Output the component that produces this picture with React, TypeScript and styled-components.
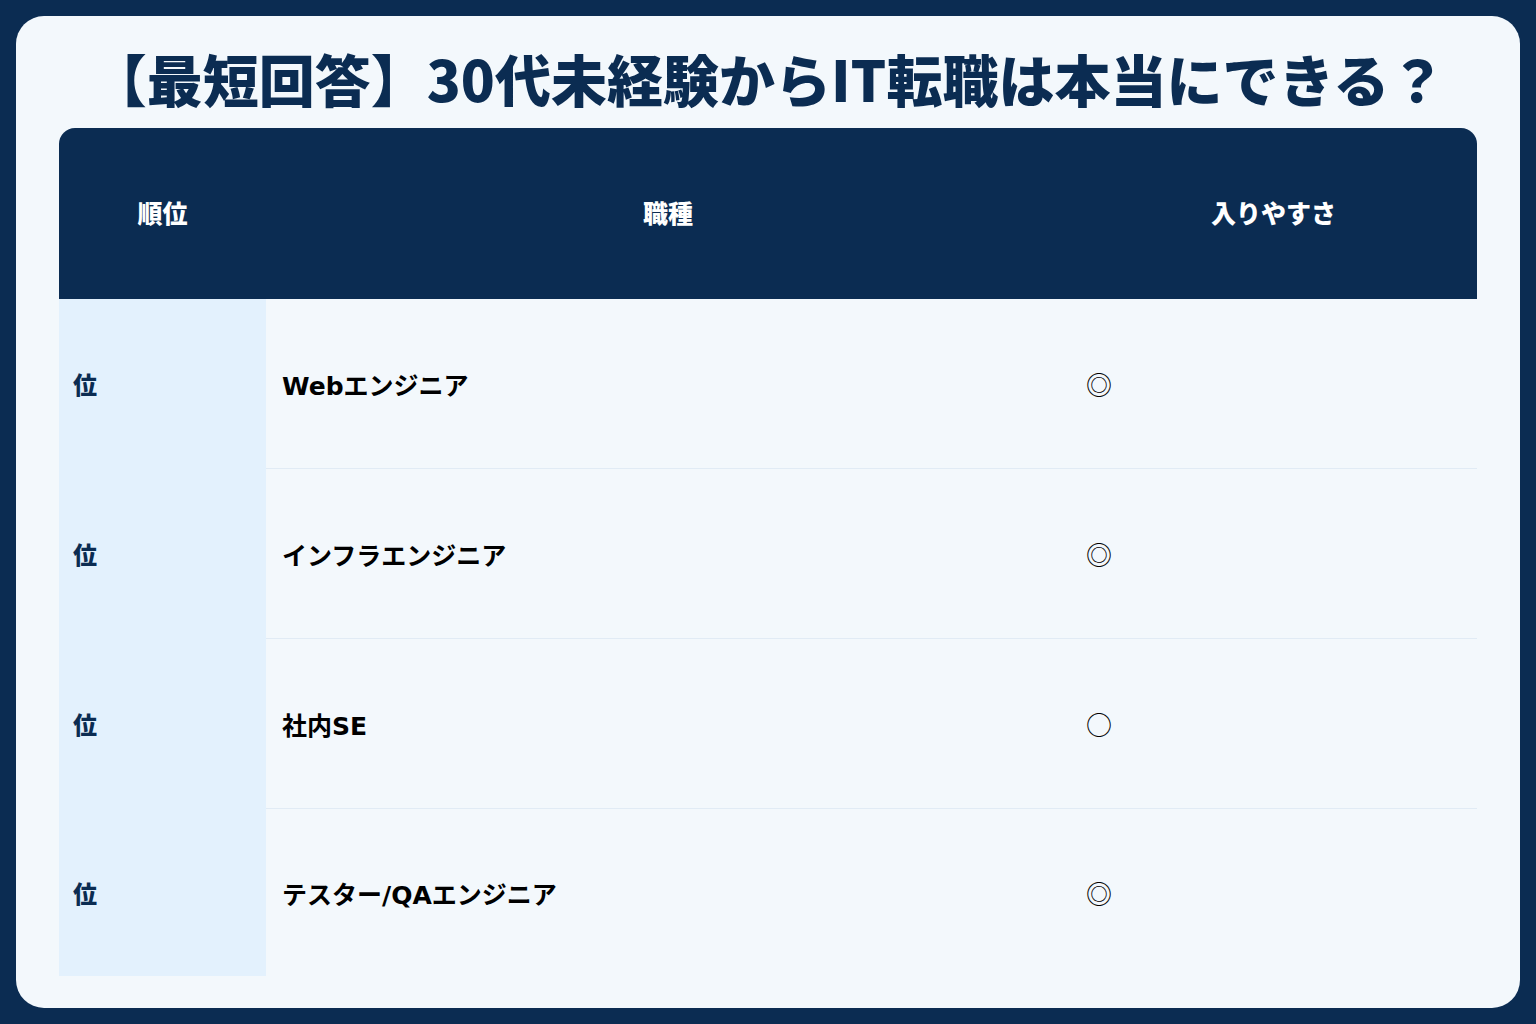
import React from "react";
import styled, { createGlobalStyle } from "styled-components";

const GlobalStyle = createGlobalStyle`
  html, body {
    margin: 0;
    padding: 0;
    background: #0b2c52;
  }
  body {
    font-family: "DejaVu Sans", "Noto Sans CJK JP", sans-serif;
  }
`;

type Row = { rank: string; job: string; ease: string };

const rows: Row[] = [
  { rank: "位", job: "Webエンジニア", ease: "◎" },
  { rank: "位", job: "インフラエンジニア", ease: "◎" },
  { rank: "位", job: "社内SE", ease: "○" },
  { rank: "位", job: "テスター/QAエンジニア", ease: "◎" },
];

const App: React.FC = () => {
  return (
    <>
      <GlobalStyle />
      <Page>
        <Card>
          <Title>【最短回答】30代未経験からIT転職は本当にできる？</Title>
          <Table>
            <colgroup>
              <col style={{ width: 207 }} />
              <col style={{ width: 804 }} />
              <col style={{ width: 407 }} />
            </colgroup>
            <thead>
              <tr>
                <Th>順位</Th>
                <Th>職種</Th>
                <Th>入りやすさ</Th>
              </tr>
            </thead>
            <tbody>
              {rows.map((r, i) => (
                <BodyRow key={i} $last={i === rows.length - 1}>
                  <RankCell>{r.rank}</RankCell>
                  <JobCell>{r.job}</JobCell>
                  <EaseCell>{r.ease}</EaseCell>
                </BodyRow>
              ))}
            </tbody>
          </Table>
        </Card>
      </Page>
    </>
  );
};

export default App;

const Page = styled.div`
  width: 1536px;
  height: 1024px;
  padding: 16px;
  box-sizing: border-box;
  background: #0b2c52;
`;

const Card = styled.div`
  height: 100%;
  box-sizing: border-box;
  background: #f3f8fc;
  border-radius: 28px;
  padding: 26px 43px 32px;
  display: flex;
  flex-direction: column;
`;

const Title = styled.h1`
  flex-shrink: 0;
  margin: 0 0 12px;
  height: 74px;
  line-height: 72px;
  text-align: center;
  font-family: "Noto Sans CJK JP", sans-serif;
  font-size: 56px;
  font-weight: 900;
  color: #0b2c52;
  white-space: nowrap;
`;

const Table = styled.table`
  flex-shrink: 0;
  width: 1418px;
  border-collapse: separate;
  border-spacing: 0;
  table-layout: fixed;
`;

const Th = styled.th`
  height: 167px;
  background: #0b2c52;
  color: #ffffff;
  font-family: "Noto Sans CJK JP", sans-serif;
  font-size: 25px;
  font-weight: 900;
  text-align: center;
  vertical-align: middle;
  padding: 0 0 4px;

  &:first-child {
    border-top-left-radius: 16px;
  }
  &:last-child {
    border-top-right-radius: 16px;
  }
`;

const BodyRow = styled.tr<{ $last: boolean }>`
  td {
    height: ${(p) => (p.$last ? 167 : 169)}px;
    border-bottom: ${(p) => (p.$last ? "none" : "1px solid #e1ebf5")};
  }
`;

const Cell = styled.td`
  padding: 0 16px;
  vertical-align: middle;
  text-align: left;
  font-size: 25px;
  font-weight: 700;
  color: #000000;
  background: #f3f8fc;
`;

const RankCell = styled(Cell)`
  padding-left: 14px;
  background: #e3f1fd;
  color: #0b2c52;
  font-family: "Noto Sans CJK JP", sans-serif;
  font-weight: 900;
  font-size: 24px;
  && {
    border-bottom-color: #e3f1fd;
  }
`;

const JobCell = styled(Cell)``;

const EaseCell = styled(Cell)`
  font-family: "Noto Sans CJK JP", sans-serif;
  font-weight: 400;
  font-size: 26px;
`;
